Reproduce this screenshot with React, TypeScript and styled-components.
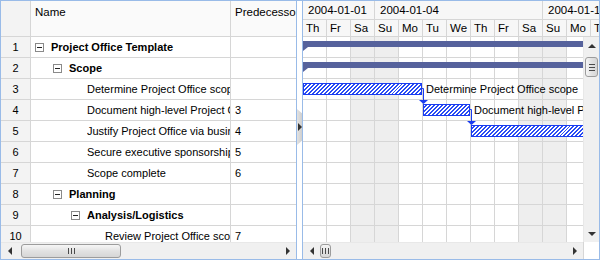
import React from "react";
import styled, { createGlobalStyle } from "styled-components";

const GlobalStyle = createGlobalStyle`
	body {
		margin: 0;
		font-family: "Liberation Sans", Arial, sans-serif;
		font-size: 11px;
		color: #000;
	}
`;

type Task = {
	id: number;
	name: string;
	depth: number;
	group?: boolean;
	pred?: string;
};

type Bar =
	| { kind: "summary"; left: number; width: number }
	| { kind: "task"; left: number; width: number; label?: string }
	| null;

const tasks: Task[] = [
	{ id: 1, name: "Project Office Template", depth: 0, group: true },
	{ id: 2, name: "Scope", depth: 1, group: true },
	{ id: 3, name: "Determine Project Office scope", depth: 2 },
	{ id: 4, name: "Document high-level Project Office requirements", depth: 2, pred: "3" },
	{ id: 5, name: "Justify Project Office via business model", depth: 2, pred: "4" },
	{ id: 6, name: "Secure executive sponsorship", depth: 2, pred: "5" },
	{ id: 7, name: "Scope complete", depth: 2, pred: "6" },
	{ id: 8, name: "Planning", depth: 1, group: true },
	{ id: 9, name: "Analysis/Logistics", depth: 2, group: true },
	{ id: 10, name: "Review Project Office scope", depth: 3, pred: "7" },
];

const bars: Bar[] = [
	{ kind: "summary", left: 0, width: 400 },
	{ kind: "summary", left: 0, width: 400 },
	{ kind: "task", left: 0, width: 119, label: "Determine Project Office scope" },
	{ kind: "task", left: 120, width: 47, label: "Document high-level Project Office requirements" },
	{ kind: "task", left: 168, width: 200 },
	null,
	null,
	null,
	null,
	null,
];

const days = ["Th", "Fr", "Sa", "Su", "Mo", "Tu", "We", "Th", "Fr", "Sa", "Su", "Mo", "Tu"];
const weeks = [
	{ label: "2004-01-01", days: 3 },
	{ label: "2004-01-04", days: 7 },
	{ label: "2004-01-11", days: 7 },
];
const DAY = 24;
const isWeekend = (d: string) => d === "Sa" || d === "Su";

const App: React.FC = () => {
	return (
		<>
			<GlobalStyle />
			<Frame>
				<LeftPane>
					<GridHeader>
						<HeadCell $num />
						<HeadCell>Name</HeadCell>
						<HeadCell>PredecessorLink</HeadCell>
					</GridHeader>
					<GridBody>
						{tasks.map((t) => (
							<GridRow key={t.id}>
								<NumCell>{t.id}</NumCell>
								<NameCell $depth={t.depth} $bold={!!t.group}>
									<ToggleSlot>{t.group && <Toggle />}</ToggleSlot>
									<NameText>{t.name}</NameText>
								</NameCell>
								<Cell>{t.pred}</Cell>
							</GridRow>
						))}
					</GridBody>
					<HScroll>
						<ArrowBtn>
							<ArrowLeft />
						</ArrowBtn>
						<Track>
							<HThumb $start={3} $size={100}>
								<Grip />
							</HThumb>
						</Track>
						<ArrowBtn>
							<ArrowRight />
						</ArrowBtn>
					</HScroll>
				</LeftPane>

				<Splitter>
					<SplitTab>
						<ArrowRight />
					</SplitTab>
				</Splitter>

				<RightPane>
					<TimeHeader>
						<TimeRow>
							{weeks.map((w) => (
								<WeekCell key={w.label} $days={w.days}>
									{w.label}
								</WeekCell>
							))}
						</TimeRow>
						<TimeRow>
							{days.map((d, i) => (
								<DayCell key={i}>{d}</DayCell>
							))}
						</TimeRow>
					</TimeHeader>
					<Middle>
						<ChartViewport>
							{bars.map((b, i) => (
								<ChartRow key={i}>
									{days.map((d, j) => (
										<ChartCell key={j} $weekend={isWeekend(d)} />
									))}
									{b && b.kind === "summary" && (
										<SummaryBar style={{ left: b.left, width: b.width }} />
									)}
									{b && b.kind === "task" && (
										<>
											<TaskBar style={{ left: b.left, width: b.width }} />
											{b.label && (
												<BarLabel style={{ left: b.left + b.width + 4 }}>
													{b.label}
												</BarLabel>
											)}
										</>
									)}
								</ChartRow>
							))}
							<Links width="280" height="205">
								<path d="M119 51.5H120.5V63" />
								<polygon points="116,63 125,63 120.5,67" />
								<path d="M167 72.5H168.5V84" />
								<polygon points="164,84 173,84 168.5,88" />
							</Links>
						</ChartViewport>
						<VScroll>
							<VArrowBtn>
								<ArrowUp />
							</VArrowBtn>
							<VTrack>
								<VThumb $start={3} $size={20}>
									<VGrip />
								</VThumb>
							</VTrack>
							<VArrowBtn>
								<ArrowDown />
							</VArrowBtn>
						</VScroll>
					</Middle>
					<BottomBar>
						<HScroll $grow>
							<ArrowBtn>
								<ArrowLeft />
							</ArrowBtn>
							<Track>
								<HThumb $start={0} $size={11}>
									<Grip />
								</HThumb>
							</Track>
							<ArrowBtn>
								<ArrowRight />
							</ArrowBtn>
						</HScroll>
						<Corner />
					</BottomBar>
				</RightPane>
			</Frame>
		</>
	);
};

export default App;

const LINE = "#d6d6d6";
const BLUE_EDGE = "#99bbe8";

const Frame = styled.div`
	width: 600px;
	height: 260px;
	box-sizing: border-box;
	border: 1px solid ${BLUE_EDGE};
	display: flex;
	overflow: hidden;
	background: #fff;
`;

const LeftPane = styled.div`
	width: 296px;
	flex: none;
	box-sizing: border-box;
	border-right: 1px solid ${BLUE_EDGE};
	display: flex;
	flex-direction: column;
	overflow: hidden;
`;

const GridHeader = styled.div`
	height: 36px;
	flex: none;
	box-sizing: border-box;
	display: grid;
	grid-template-columns: 30px 200px 100px;
	border-bottom: 1px solid ${LINE};
	background: #f7f7f7;
`;

const HeadCell = styled.div<{ $num?: boolean }>`
	box-sizing: border-box;
	border-right: 1px solid ${LINE};
	padding: 5px 0 0 4px;
	white-space: nowrap;
	overflow: hidden;
	font-size: 11.5px;
	background: ${(p) => (p.$num ? "#f3f3f3" : "#fafafa")};
`;

const GridBody = styled.div`
	height: 205px;
	flex: none;
	overflow: hidden;
`;

const GridRow = styled.div`
	display: grid;
	grid-template-columns: 30px 200px 100px;
	height: 21px;
	box-sizing: border-box;
	border-bottom: 1px solid ${LINE};
	line-height: 20px;
`;

const Cell = styled.div`
	box-sizing: border-box;
	min-width: 0;
	border-right: 1px solid ${LINE};
	padding-left: 4px;
	white-space: nowrap;
	overflow: hidden;
`;

const NumCell = styled(Cell)`
	padding-left: 0;
	text-align: center;
	background: #f3f3f3;
`;

const NameCell = styled(Cell)<{ $depth: number; $bold: boolean }>`
	display: flex;
	align-items: center;
	padding-left: ${(p) => 4 + p.$depth * 18}px;
	font-weight: ${(p) => (p.$bold ? "bold" : "normal")};
`;

const ToggleSlot = styled.span`
	width: 16px;
	flex: none;
	display: flex;
	align-items: center;
`;

const Toggle = styled.span`
	width: 9px;
	height: 9px;
	box-sizing: border-box;
	border: 1px solid #8a8a8a;
	background: #fff;
	position: relative;
	&::after {
		content: "";
		position: absolute;
		left: 1px;
		right: 1px;
		top: 3px;
		height: 1px;
		background: #222;
	}
`;

const NameText = styled.span`
	flex: 1;
	min-width: 0;
	overflow: hidden;
	white-space: nowrap;
	text-overflow: clip;
`;

const HScroll = styled.div<{ $grow?: boolean }>`
	height: 17px;
	flex: ${(p) => (p.$grow ? "1" : "none")};
	display: flex;
	background: #f0f0f0;
	border-top: 1px solid #e8e8e8;
	box-sizing: border-box;
`;

const ArrowBtn = styled.div`
	width: 17px;
	flex: none;
	display: flex;
	align-items: center;
	justify-content: center;
`;

const Track = styled.div`
	flex: 1;
	position: relative;
`;

const HThumb = styled.div<{ $start: number; $size: number }>`
	position: absolute;
	top: 1px;
	bottom: 1px;
	left: ${(p) => p.$start}px;
	width: ${(p) => p.$size}px;
	box-sizing: border-box;
	border: 1px solid #9c9c9c;
	border-radius: 3px;
	background: linear-gradient(#f6f6f6, #e2e2e2 50%, #d6d6d6);
	display: flex;
	align-items: center;
	justify-content: center;
`;

const Grip = styled.span`
	width: 7px;
	height: 6px;
	background: repeating-linear-gradient(90deg, #4a4a4a 0 1px, transparent 1px 3px);
`;

const ArrowLeft = styled.span`
	width: 0;
	height: 0;
	border-top: 4px solid transparent;
	border-bottom: 4px solid transparent;
	border-right: 4px solid #333;
`;

const ArrowRight = styled.span`
	width: 0;
	height: 0;
	border-top: 4px solid transparent;
	border-bottom: 4px solid transparent;
	border-left: 4px solid #333;
`;

const ArrowUp = styled.span`
	width: 0;
	height: 0;
	border-left: 4px solid transparent;
	border-right: 4px solid transparent;
	border-bottom: 4px solid #333;
`;

const ArrowDown = styled.span`
	width: 0;
	height: 0;
	border-left: 4px solid transparent;
	border-right: 4px solid transparent;
	border-top: 4px solid #333;
`;

const Splitter = styled.div`
	width: 5px;
	flex: none;
	background: #fff;
	display: flex;
	align-items: center;
`;

const SplitTab = styled.div`
	width: 5px;
	height: 36px;
	margin-top: -6px;
	background: linear-gradient(90deg, #e2e2e2, #cfcfcf);
	clip-path: polygon(0 0, 100% 12%, 100% 88%, 0 100%);
	display: flex;
	align-items: center;
	justify-content: center;
`;

const RightPane = styled.div`
	flex: 1;
	min-width: 0;
	box-sizing: border-box;
	border-left: 1px solid ${BLUE_EDGE};
	display: flex;
	flex-direction: column;
	overflow: hidden;
`;

const TimeHeader = styled.div`
	height: 36px;
	flex: none;
	background: #f7f7f7;
	border-bottom: 1px solid ${LINE};
	box-sizing: border-box;
	overflow: hidden;
`;

const TimeRow = styled.div`
	display: flex;
	height: 18px;
	box-sizing: border-box;
	& + & {
		height: 17px;
		border-top: 1px solid ${LINE};
	}
`;

const WeekCell = styled.div<{ $days: number }>`
	width: ${(p) => p.$days * DAY}px;
	flex: none;
	box-sizing: border-box;
	border-right: 1px solid ${LINE};
	padding-left: 5px;
	line-height: 18px;
	font-size: 11.5px;
	white-space: nowrap;
`;

const DayCell = styled.div`
	width: ${DAY}px;
	flex: none;
	box-sizing: border-box;
	border-right: 1px solid ${LINE};
	padding-left: 3px;
	line-height: 17px;
	font-size: 11.5px;
`;

const Middle = styled.div`
	height: 205px;
	flex: none;
	display: flex;
`;

const ChartViewport = styled.div`
	width: 280px;
	flex: none;
	position: relative;
	overflow: hidden;
`;

const ChartRow = styled.div`
	position: relative;
	display: flex;
	height: 21px;
	box-sizing: border-box;
	border-bottom: 1px solid ${LINE};
`;

const ChartCell = styled.div<{ $weekend: boolean }>`
	width: ${DAY}px;
	flex: none;
	box-sizing: border-box;
	border-right: 1px solid ${LINE};
	background: ${(p) => (p.$weekend ? "#eeeeee" : "#fff")};
`;

const SummaryBar = styled.div`
	position: absolute;
	top: 4px;
	height: 6px;
	background: #56629c;
	&::after {
		content: "";
		position: absolute;
		left: 0;
		top: 6px;
		border-top: 4px solid #56629c;
		border-right: 5px solid transparent;
	}
`;

const TaskBar = styled.div`
	position: absolute;
	top: 4px;
	height: 12px;
	box-sizing: border-box;
	border: 1px solid #1a3cf0;
	background: repeating-linear-gradient(135deg, #fff 0 1.4px, #2a4cf5 1.4px 2.8px);
`;

const BarLabel = styled.span`
	position: absolute;
	top: 0;
	line-height: 20px;
	white-space: nowrap;
`;

const Links = styled.svg`
	position: absolute;
	top: 0;
	left: 0;
	pointer-events: none;
	path {
		fill: none;
		stroke: #1a3cf0;
		stroke-width: 1;
	}
	polygon {
		fill: #1a3cf0;
	}
`;

const VScroll = styled.div`
	width: 16px;
	flex: none;
	display: flex;
	flex-direction: column;
	background: #f0f0f0;
	border-left: 1px solid #e8e8e8;
	box-sizing: border-box;
`;

const VArrowBtn = styled.div`
	height: 17px;
	flex: none;
	display: flex;
	align-items: center;
	justify-content: center;
`;

const VTrack = styled.div`
	flex: 1;
	position: relative;
`;

const VThumb = styled.div<{ $start: number; $size: number }>`
	position: absolute;
	left: 1px;
	right: 1px;
	top: ${(p) => p.$start}px;
	height: ${(p) => p.$size}px;
	box-sizing: border-box;
	border: 1px solid #9c9c9c;
	border-radius: 3px;
	background: linear-gradient(90deg, #f6f6f6, #e2e2e2 50%, #d6d6d6);
	display: flex;
	align-items: center;
	justify-content: center;
`;

const VGrip = styled.span`
	width: 6px;
	height: 7px;
	background: repeating-linear-gradient(180deg, #4a4a4a 0 1px, transparent 1px 3px);
`;

const BottomBar = styled.div`
	height: 17px;
	flex: none;
	display: flex;
`;

const Corner = styled.div`
	width: 16px;
	flex: none;
	background: #fff;
	box-sizing: border-box;
	border-left: 1px solid ${LINE};
`;
